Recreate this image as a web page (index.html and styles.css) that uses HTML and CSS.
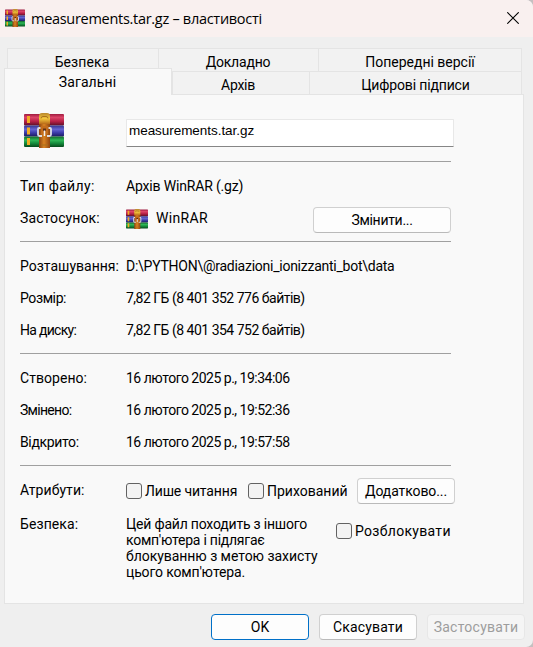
FILE: index.html
```html
<!DOCTYPE html>
<html lang="uk">
<head>
<meta charset="utf-8">
<title>measurements.tar.gz – властивості</title>
<link rel="stylesheet" href="styles.css">
</head>
<body>
<svg width="0" height="0" class="defs">
  <defs>
    <linearGradient id="red" x2="0" y2="1"><stop offset="0" stop-color="#a01c40"/><stop offset=".3" stop-color="#dc4468"/><stop offset=".65" stop-color="#b51f45"/><stop offset="1" stop-color="#5e1028"/></linearGradient>
    <linearGradient id="blue" x2="0" y2="1"><stop offset="0" stop-color="#34358c"/><stop offset=".35" stop-color="#6565d2"/><stop offset=".65" stop-color="#3c3caa"/><stop offset="1" stop-color="#1c1a60"/></linearGradient>
    <linearGradient id="green" x2="0" y2="1"><stop offset="0" stop-color="#10682b"/><stop offset=".35" stop-color="#2fb757"/><stop offset=".65" stop-color="#158a3c"/><stop offset="1" stop-color="#084a1c"/></linearGradient>
    <linearGradient id="belt"><stop offset="0" stop-color="#8c4310"/><stop offset=".45" stop-color="#d98322"/><stop offset="1" stop-color="#91450f"/></linearGradient>
    <linearGradient id="gold" x2="0" y2="1"><stop offset="0" stop-color="#b8862c"/><stop offset=".5" stop-color="#f3c63e"/><stop offset="1" stop-color="#b96a18"/></linearGradient>
    <symbol id="winrar" viewBox="0 0 40 35" preserveAspectRatio="none">
      <rect x="0" y="1" width="40" height="11.5" rx="1" fill="url(#red)"/>
      <rect x="0" y="12.5" width="40" height="11" rx="1" fill="url(#blue)"/>
      <rect x="0" y="23.5" width="40" height="10.5" rx="1" fill="url(#green)"/>
      <path d="M3 3h3v7H3zM3 14.500h3v7H3zM3 25h3v7H3z" fill="#f2ad24"/>
      <rect x="15" y="8" width="11" height="27" fill="url(#belt)"/>
      <path d="M15 11V3q0-3 3-3h5q3 0 3 3v8z" fill="url(#gold)"/>
      <path d="M17 5.500q0-2 2-2h3q2 0 2 2M17 32h7" fill="none" stroke="#a8701c" stroke-width="1"/>
      <path d="M16.500 15h-1.500q-1 0-1 1v5.500q0 1.500 1.500 1.500h2.500M24.500 15h1.500q1 0 1 1v5.500q0 1.500-1.500 1.500h-2.500" fill="none" stroke="#dedee4" stroke-width="1.800"/>
      <path d="M17 13h7v8h-7z" fill="#c36c1c"/>
      <path d="M19 15.500h3v2.500h-3z" fill="#623015"/>
      <path d="M20.500 17.500v5.500" stroke="#f2f2f2" stroke-width="1.500"/>
    </symbol>
  </defs>
</svg>
<div class="window">
  <header class="titlebar">
    <svg class="icon-title"><use href="#winrar"/></svg>
    <span class="title">measurements.tar.gz – властивості</span>
    <svg class="close" viewBox="0 0 12 12"><path d="M.3.3l11.400 11.400M11.700.3L.3 11.700"/></svg>
  </header>
  <nav class="tabs back">
    <div class="tab security">Безпека</div><div class="tab details">Докладно</div><div class="tab versions">Попередні версії</div>
  </nav>
  <nav class="tabs front">
    <div class="tab active">Загальні</div><div class="tab archive">Архів</div><div class="tab signs">Цифрові підписи</div>
  </nav>
  <main class="panel">
    <section class="file">
      <svg class="icon-file"><use href="#winrar"/></svg>
      <div class="name">measurements.tar.gz</div>
    </section>
    <section>
      <div class="row"><span class="label t-type">Тип файлу:</span><span class="t-kind">Архів WinRAR (.gz)</span></div>
      <div class="row"><span class="label t-app">Застосунок:</span><svg class="icon-app"><use href="#winrar"/></svg><span class="app">WinRAR</span><div class="button change">Змінити...</div></div>
    </section>
    <section>
      <div class="row"><span class="label">Розташування:</span><span class="t-path">D:\PYTHON\@radiazioni_ionizzanti_bot\data</span></div>
      <div class="row"><span class="label t-size">Розмір:</span><span class="t-bytes">7,82 ГБ (8 401 352 776 байтів)</span></div>
      <div class="row"><span class="label t-disk">На диску:</span><span class="t-bytes">7,82 ГБ (8 401 354 752 байтів)</span></div>
    </section>
    <section>
      <div class="row"><span class="label t-created">Створено:</span><span class="t-date">16 лютого 2025 р., 19:34:06</span></div>
      <div class="row"><span class="label t-changed">Змінено:</span><span class="t-date">16 лютого 2025 р., 19:52:36</span></div>
      <div class="row"><span class="label t-opened">Відкрито:</span><span class="t-date">16 лютого 2025 р., 19:57:58</span></div>
    </section>
    <section class="last">
      <div class="attrs"><span class="label t-attrs">Атрибути:</span><i class="check"></i><span class="readonly">Лише читання</span><i class="check"></i><span class="hidden">Прихований</span><div class="button more">Додатково...</div></div>
      <div class="safety"><span class="label t-safe">Безпека:</span>
        <p><span class="l1">Цей файл походить з іншого</span><br><span class="l2">комп'ютера і підлягає</span><br><span class="l3">блокуванню з метою захисту</span><br><span class="l4">цього комп'ютера.</span></p>
        <div class="unblock"><i class="check"></i><span class="t-unblock">Розблокувати</span></div>
      </div>
    </section>
  </main>
  <footer>
    <div class="button ok">OK</div><div class="button cancel">Скасувати</div><div class="button apply">Застосувати</div>
  </footer>
</div>
</body>
</html>
```
FILE: styles.css
```css
* { box-sizing: border-box; }
body { margin: 0; background: #c5bfc0; font: 14px/16px Roboto, "Liberation Sans", sans-serif; color: #000; overflow: hidden; white-space: nowrap; }
.defs { position: absolute; }
.window { width: 533px; height: 647px; background: #efefef; border-radius: 0 7px 7px 0; overflow: hidden; }
.titlebar { height: 37px; padding: 0 14px 0 5px; display: flex; align-items: center; background: #f9f0ef; }
.icon-title { width: 20px; height: 18px; margin-top: -1px; }
.title { font: 14.500px/20px "Open Sans", sans-serif; letter-spacing: -.29px; margin: 0 auto 0 6px; }
.close { width: 12px; height: 12px; margin-top: -1px; stroke: #000; stroke-width: 1.100; }
.tabs { display: flex; width: 515px; margin-left: 7px; height: 23px; }
.back { margin-top: 11px; }
.tab { background: #f2f2f2; border: 1px solid #e4e4e4; border-width: 1px 0 0 1px; padding-top: 5px; text-align: center; }
.security { width: 151px; letter-spacing: .1px; padding-right: 2px; }
.details { width: 160px; letter-spacing: -.2px; padding-right: 1px; }
.versions { width: 204px; border-right-width: 1px; }
.active { width: 168px; height: 27px; margin: -3px 0 0 -3px; border-right-width: 1px; background: #f9f9f9; z-index: 1; letter-spacing: .1px; padding-right: 1px; }
.archive { width: 137px; padding-right: 6px; letter-spacing: -.25px; }
.signs { width: 213px; border-right-width: 1px; letter-spacing: -.15px; }
.panel { width: 520px; height: 510px; margin-left: 4px; padding-left: 15px; background: #f9f9f9; border: 1px solid #e4e4e4; }
section { width: 431px; border-bottom: 1px solid #a0a0a0; padding: 8px 0 7px; }
.file { height: 67px; padding: 18px 0 0 4px; display: flex; }
.icon-file { width: 40px; height: 35px; flex: none; }
.name { flex: none; width: 328px; height: 28px; margin: 6px 0 0 62px; padding: 3px 2px; background: #fff; border: 1px solid #e8e8e8; border-bottom-color: #868686; border-radius: 1px; font: 13.500px/16px "Liberation Sans", sans-serif; letter-spacing: -.05px; }
.row { display: flex; align-items: center; height: 32px; }
.label { width: 106px; flex: none; }
.t-type { letter-spacing: .35px; }
.t-app { letter-spacing: .1px; }
.t-size { letter-spacing: -.4px; }
.t-disk { letter-spacing: -.7px; }
.t-created, .t-attrs { letter-spacing: .05px; }
.t-changed { letter-spacing: -.7px; }
.t-opened { letter-spacing: -.35px; }
.t-safe { letter-spacing: .1px; }
.t-kind { letter-spacing: -.17px; }
.t-path { letter-spacing: -.25px; }
.t-bytes, .t-date { letter-spacing: -.5px; }
.t-unblock { letter-spacing: .3px; }
.icon-app { width: 22px; height: 20px; margin-top: 2px; }
.app { margin-left: 8px; letter-spacing: .35px; }
.button { display: flex; align-items: center; justify-content: center; height: 26px; border: 1px solid #d0d0d0; border-bottom-color: #bababa; border-radius: 4px; background: #fdfdfd; }
.change { width: 138px; margin: 3px 0 0 auto; letter-spacing: -.3px; }
.last { border: 0; width: 500px; padding-top: 12px; }
.attrs { display: flex; align-items: center; height: 26px; }
.attrs .label { padding-bottom: 2px; }
.check { flex: none; width: 16px; height: 16px; border: 1px solid #626262; border-radius: 3px; background: #f3f3f3; }
.readonly { width: 103px; margin-left: 3px; letter-spacing: -.15px; }
.hidden { width: 82px; margin-left: 3px; }
.more { width: 98px; margin-left: 8px; letter-spacing: -.1px; }
.safety { display: flex; margin-top: 12px; }
.safety p { margin: 0; width: 210px; }
.l1 { letter-spacing: -.2px; }
.l2 { letter-spacing: -.25px; }
.l3 { letter-spacing: -.05px; }
.l4 { letter-spacing: -.15px; }
.unblock { display: flex; align-items: center; height: 16px; gap: 3px; margin-top: 7px; }
footer { display: flex; justify-content: flex-end; gap: 10px; padding: 10px 8px 0 0; }
footer .button { width: 98px; }
.ok { border-color: #0070c8; }
.cancel { letter-spacing: .15px; }
.apply { color: #9d9d9d; border-color: #e7e7e7; background: #f5f5f5; letter-spacing: .25px; }
```
